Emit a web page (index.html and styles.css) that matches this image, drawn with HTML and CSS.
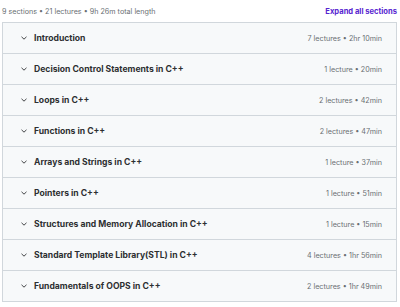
FILE: index.html
```html
<!DOCTYPE html>
<html lang="en">
<head>
  <meta charset="UTF-8">
  <title>Course content</title>
  <link rel="stylesheet" href="styles.css">
</head>
<body>

  <div class="curriculum">
    <div class="summary">
      <span class="stats">9 sections • 21 lectures • 9h 26m total length</span>
      <a class="expand" href="#">Expand all sections</a>
    </div>

    <div class="sections">
      <div class="section">
        <span class="chevron"><svg width="8" height="8" viewBox="0 0 8 8"><path d="M1.5 2.8 L4 5.2 L6.5 2.8" fill="none" stroke="#2d2f31" stroke-width="0.9"/></svg></span>
        <span class="title">Introduction</span>
        <span class="meta">7 lectures • 2hr 10min</span>
      </div>
      <div class="section">
        <span class="chevron"><svg width="8" height="8" viewBox="0 0 8 8"><path d="M1.5 2.8 L4 5.2 L6.5 2.8" fill="none" stroke="#2d2f31" stroke-width="0.9"/></svg></span>
        <span class="title">Decision Control Statements in C++</span>
        <span class="meta">1 lecture • 20min</span>
      </div>
      <div class="section">
        <span class="chevron"><svg width="8" height="8" viewBox="0 0 8 8"><path d="M1.5 2.8 L4 5.2 L6.5 2.8" fill="none" stroke="#2d2f31" stroke-width="0.9"/></svg></span>
        <span class="title">Loops in C++</span>
        <span class="meta">2 lectures • 42min</span>
      </div>
      <div class="section">
        <span class="chevron"><svg width="8" height="8" viewBox="0 0 8 8"><path d="M1.5 2.8 L4 5.2 L6.5 2.8" fill="none" stroke="#2d2f31" stroke-width="0.9"/></svg></span>
        <span class="title">Functions in C++</span>
        <span class="meta">2 lectures • 47min</span>
      </div>
      <div class="section">
        <span class="chevron"><svg width="8" height="8" viewBox="0 0 8 8"><path d="M1.5 2.8 L4 5.2 L6.5 2.8" fill="none" stroke="#2d2f31" stroke-width="0.9"/></svg></span>
        <span class="title">Arrays and Strings in C++</span>
        <span class="meta">1 lecture • 37min</span>
      </div>
      <div class="section">
        <span class="chevron"><svg width="8" height="8" viewBox="0 0 8 8"><path d="M1.5 2.8 L4 5.2 L6.5 2.8" fill="none" stroke="#2d2f31" stroke-width="0.9"/></svg></span>
        <span class="title">Pointers in C++</span>
        <span class="meta">1 lecture • 51min</span>
      </div>
      <div class="section">
        <span class="chevron"><svg width="8" height="8" viewBox="0 0 8 8"><path d="M1.5 2.8 L4 5.2 L6.5 2.8" fill="none" stroke="#2d2f31" stroke-width="0.9"/></svg></span>
        <span class="title">Structures and Memory Allocation in C++</span>
        <span class="meta">1 lecture • 15min</span>
      </div>
      <div class="section">
        <span class="chevron"><svg width="8" height="8" viewBox="0 0 8 8"><path d="M1.5 2.8 L4 5.2 L6.5 2.8" fill="none" stroke="#2d2f31" stroke-width="0.9"/></svg></span>
        <span class="title">Standard Template Library(STL) in C++</span>
        <span class="meta">4 lectures • 1hr 56min</span>
      </div>
      <div class="section">
        <span class="chevron"><svg width="8" height="8" viewBox="0 0 8 8"><path d="M1.5 2.8 L4 5.2 L6.5 2.8" fill="none" stroke="#2d2f31" stroke-width="0.9"/></svg></span>
        <span class="title">Fundamentals of OOPS in C++</span>
        <span class="meta">2 lectures • 1hr 49min</span>
      </div>
    </div>
  </div>

</body>
</html>
```

FILE: styles.css
```css
body {
  margin: 0;
  background-color: #fff;
  font-family: Inter, "Noto Sans", sans-serif;
  color: #2d2f31;
}
.curriculum {
  padding: 3px 3px 0 2px;
}
.summary {
  display: flex;
  justify-content: space-between;
  align-items: center;
  height: 17px;
  margin-bottom: 2px;
}
.stats {
  font-size: 7.2px;
  color: #6a6f73;
}
.expand {
  font-size: 7.6px;
  font-weight: 700;
  color: #5624d0;
  text-decoration: none;
}
.sections {
  border: 1px solid #d1d7dc;
  border-bottom: none;
}
.section {
  display: flex;
  align-items: center;
  height: 30px;
  padding: 0 14px 0 17px;
  background-color: #f7f9fa;
  border-bottom: 1px solid #d1d7dc;
}
.chevron {
  display: flex;
  width: 8px;
  margin-right: 6px;
}
.title {
  font-size: 8.6px;
  font-weight: 700;
  flex: 1;
}
.meta {
  font-size: 7.2px;
  color: #6a6f73;
}
```
